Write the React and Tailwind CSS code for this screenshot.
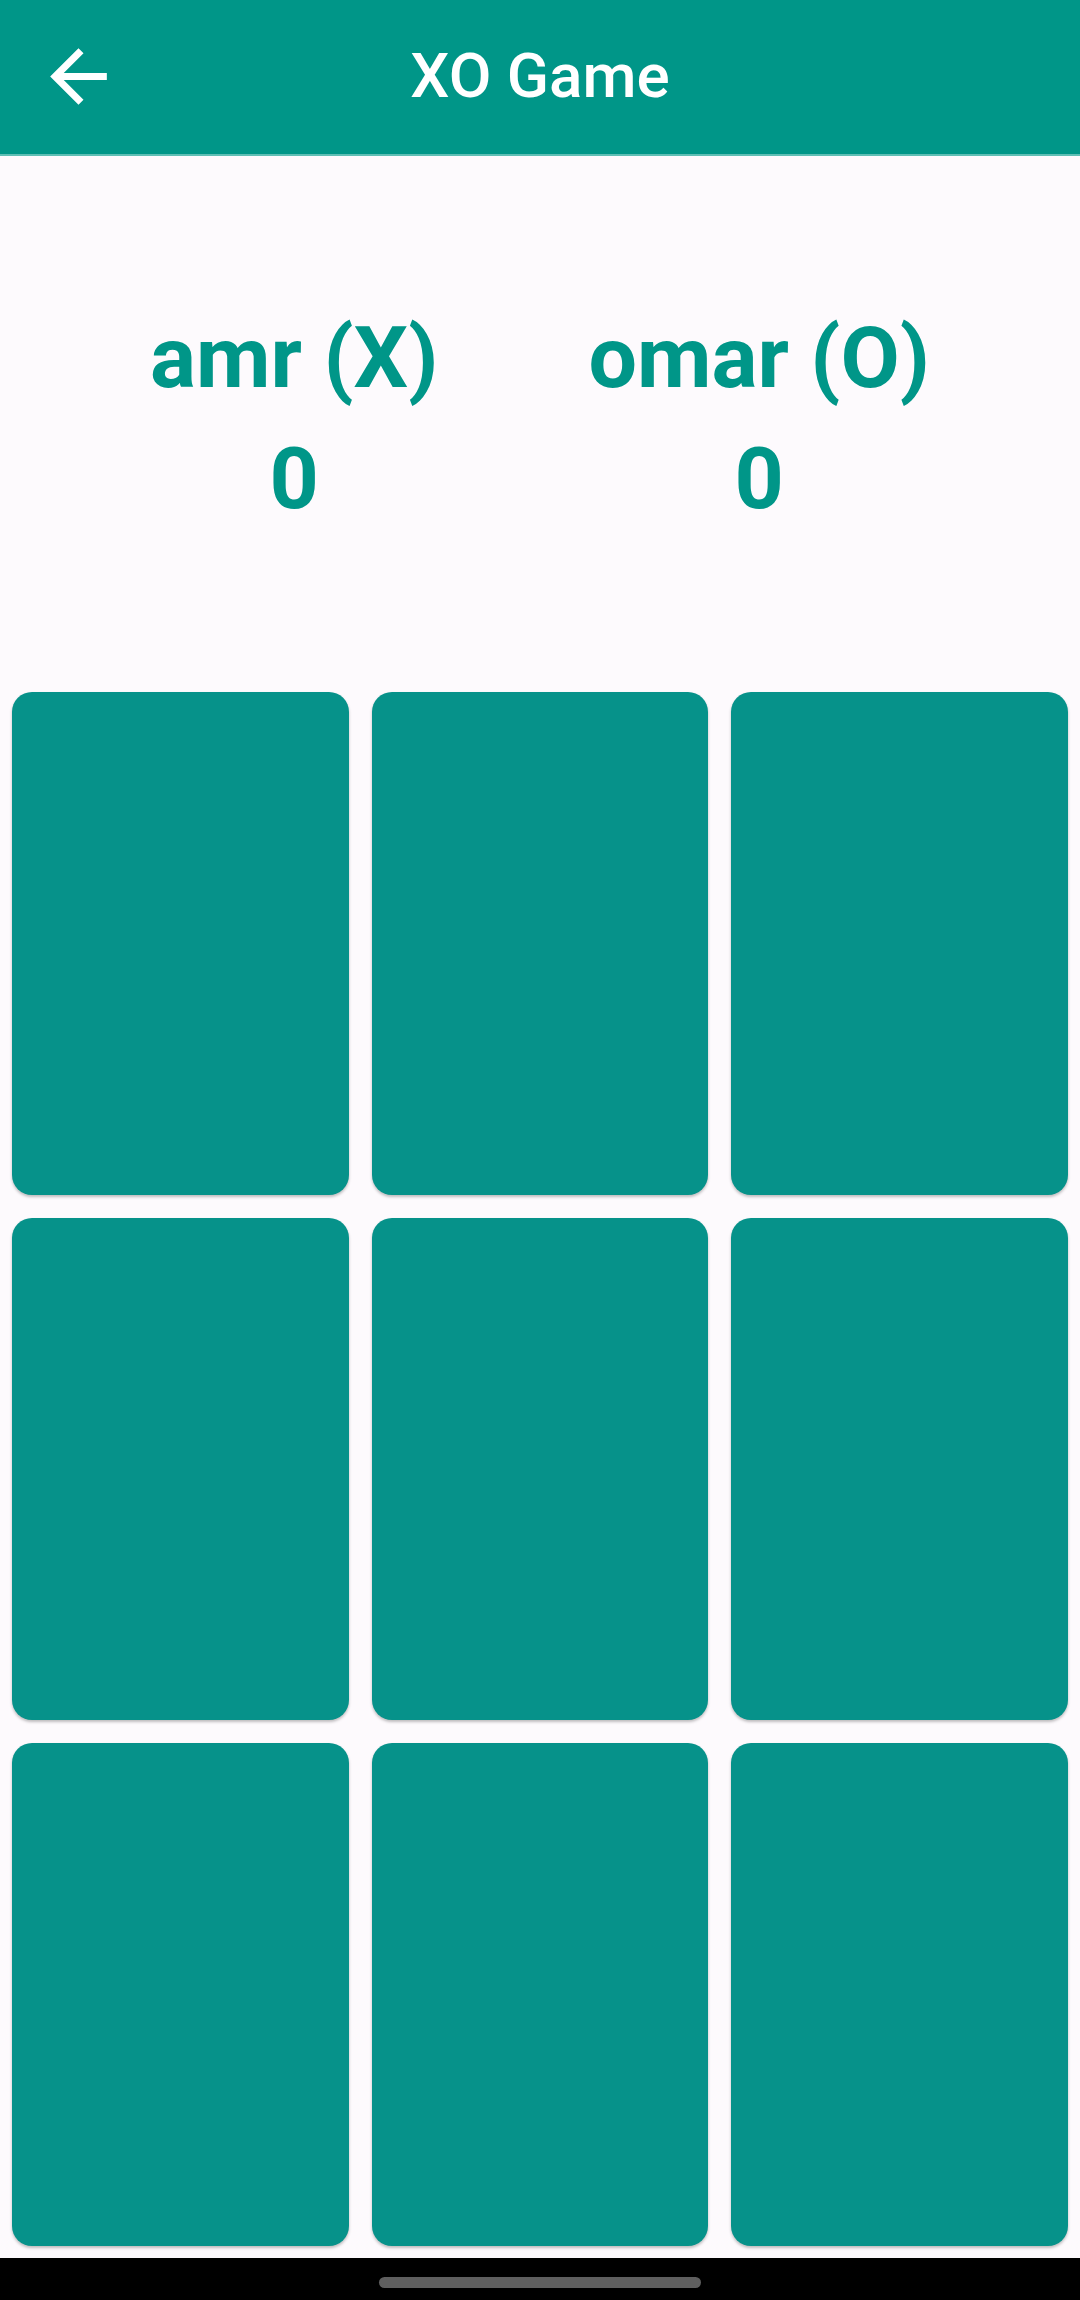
const players = [
  { name: 'amr', mark: 'X', score: 0 },
  { name: 'omar', mark: 'O', score: 0 },
]

const cells = Array.from({ length: 9 }, (_, i) => i)

function BackArrow() {
  return (
    <svg viewBox="0 0 24 24" className="w-[85px] h-[85px]" fill="white">
      <path d="M20 11H7.83l5.59-5.59L12 4l-8 8 8 8 1.41-1.41L7.83 13H20v-2z" />
    </svg>
  )
}

export default function App() {
  return (
    <div className="w-[1080px] h-[2300px] bg-[#fdfafd] flex flex-col overflow-hidden" style={{ fontFamily: 'Roboto, "Noto Sans", sans-serif' }}>
      {/* top bar */}
      <header className="relative h-[156px] shrink-0 bg-[#009688] flex items-center justify-center border-b-2 border-[#5fbfb5]">
        <button className="absolute left-[36px] top-[34px]">
          <BackArrow />
        </button>
        <h1 className="text-white text-[62px] font-medium leading-none mt-[-2px]">XO Game</h1>
      </header>

      {/* scores */}
      <section className="flex justify-evenly pt-[141px] shrink-0">
        {players.map(p => (
          <div key={p.mark} className="flex flex-col items-center text-[#009688] font-bold text-[86px] leading-[121px]">
            <span>{p.name} ({p.mark})</span>
            <span>{p.score}</span>
          </div>
        ))}
      </section>

      {/* board */}
      <div className="grid grid-cols-3 grid-rows-3 gap-[23px] px-[12px] mt-[153px] h-[1554px] shrink-0">
        {cells.map(i => (
          <button
            key={i}
            className="bg-[#06928a] rounded-[20px] shadow-[0_2px_3px_rgba(0,0,0,0.25)]"
          />
        ))}
      </div>

      {/* system nav bar */}
      <div className="mt-auto h-[42px] bg-black flex items-center justify-center">
        <div className="w-[322px] h-[11px] rounded-full bg-[#5f5f5f] mt-[6px]" />
      </div>
    </div>
  )
}
